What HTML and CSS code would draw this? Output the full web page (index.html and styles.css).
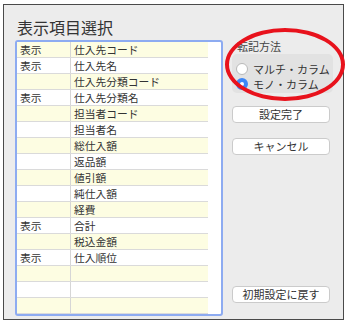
FILE: index.html
```html
<!DOCTYPE html>
<html>
    <head>
        <title>表示項目選択</title>
        <link rel="stylesheet" href="styles.css">
    </head>
    <body>
        <div class="window">
            <h1 class="title">表示項目選択</h1>
            <div class="main">
                <div class="list-box">
                    <div class="list">
                        <div class="row"><span class="c1">表示</span><span class="c2">仕入先コード</span></div>
                        <div class="row"><span class="c1">表示</span><span class="c2">仕入先名</span></div>
                        <div class="row"><span class="c1"></span><span class="c2">仕入先分類コード</span></div>
                        <div class="row"><span class="c1">表示</span><span class="c2">仕入先分類名</span></div>
                        <div class="row"><span class="c1"></span><span class="c2">担当者コード</span></div>
                        <div class="row"><span class="c1"></span><span class="c2">担当者名</span></div>
                        <div class="row"><span class="c1"></span><span class="c2">総仕入額</span></div>
                        <div class="row"><span class="c1"></span><span class="c2">返品額</span></div>
                        <div class="row"><span class="c1"></span><span class="c2">値引額</span></div>
                        <div class="row"><span class="c1"></span><span class="c2">純仕入額</span></div>
                        <div class="row"><span class="c1"></span><span class="c2">経費</span></div>
                        <div class="row"><span class="c1">表示</span><span class="c2">合計</span></div>
                        <div class="row"><span class="c1"></span><span class="c2">税込金額</span></div>
                        <div class="row"><span class="c1">表示</span><span class="c2">仕入順位</span></div>
                        <div class="row"><span class="c1"></span><span class="c2"></span></div>
                        <div class="row"><span class="c1"></span><span class="c2"></span></div>
                        <div class="row"><span class="c1"></span><span class="c2"></span></div>
                    </div>
                </div>
                <div class="side">
                    <div class="group-label">転記方法</div>
                    <div class="radio-group">
                        <label class="radio"><span class="dot"></span>マルチ・カラム</label>
                        <label class="radio"><span class="dot checked"></span>モノ・カラム</label>
                    </div>
                    <button class="btn btn-done">設定完了</button>
                    <button class="btn btn-cancel">キャンセル</button>
                    <button class="btn btn-reset">初期設定に戻す</button>
                </div>
            </div>
            <div class="mark"></div>
        </div>
    </body>
</html>
```

FILE: styles.css
```css
body {
    margin: 0;
    background-color: #ffffff;
    font-family: "Noto Sans CJK JP", "Noto Sans", sans-serif;
    color: #333333;
}

.window {
    position: relative;
    margin: 4px 0 0 3px;
    width: 339px;
    height: 314px;
    border: 1px solid #4a4a4a;
    background-color: #ececec;
}

.title {
    margin: 12px 0 0 13px;
    font-size: 16px;
    line-height: 20px;
    font-weight: normal;
    color: #333333;
}

.main {
    display: flex;
    gap: 9px;
    margin: 3px 0 0 11px;
}

.list-box {
    box-sizing: border-box;
    width: 208px;
    height: 276px;
    border: 2px solid #8dabf1;
    border-radius: 3px;
    background-color: #ffffff;
}

.list {
    width: 191px;
}

.row {
    display: flex;
    box-sizing: border-box;
    height: 16px;
    border-bottom: 1px solid #dadada;
    font-size: 10.75px;
    line-height: 15px;
    color: #333333;
}

.row:nth-child(odd) {
    background-color: #fdfde2;
}

.c1 {
    box-sizing: border-box;
    width: 54px;
    padding-left: 3px;
    border-right: 1px solid #d6d6d6;
}

.c2 {
    padding-left: 3px;
}

.side {
    display: flex;
    flex-direction: column;
    width: 101px;
    padding-bottom: 13px;
}

.group-label {
    margin: 0 0 0 5px;
    font-size: 11px;
    line-height: 13px;
    color: #444444;
}

.radio-group {
    margin-top: 1px;
    padding: 7px 0 2px 4px;
    border-radius: 5px;
    background-color: #e2e2e2;
}

.radio {
    display: flex;
    align-items: center;
    gap: 5px;
    height: 15px;
    font-size: 11px;
    color: #333333;
}

.dot {
    box-sizing: border-box;
    width: 12px;
    height: 12px;
    border: 1px solid #b9b9b9;
    border-radius: 50%;
    background-color: #ffffff;
}

.dot.checked {
    border: 4px solid #3d86f6;
    background-color: #ffffff;
}

.btn {
    width: 98px;
    height: 17px;
    padding: 0;
    border: 1px solid #cbcbcb;
    border-radius: 4px;
    background-color: #ffffff;
    font-family: "Noto Sans CJK JP", "Noto Sans", sans-serif;
    font-size: 11px;
    line-height: 15px;
    color: #333333;
}

.btn-done {
    margin-top: 13px;
}

.btn-cancel {
    margin-top: 15px;
}

.btn-reset {
    margin-top: auto;
}

.mark {
    position: absolute;
    left: 221px;
    top: 23px;
    box-sizing: border-box;
    width: 120px;
    height: 73px;
    border: 4px solid #e8121c;
    border-radius: 50%;
}
```
